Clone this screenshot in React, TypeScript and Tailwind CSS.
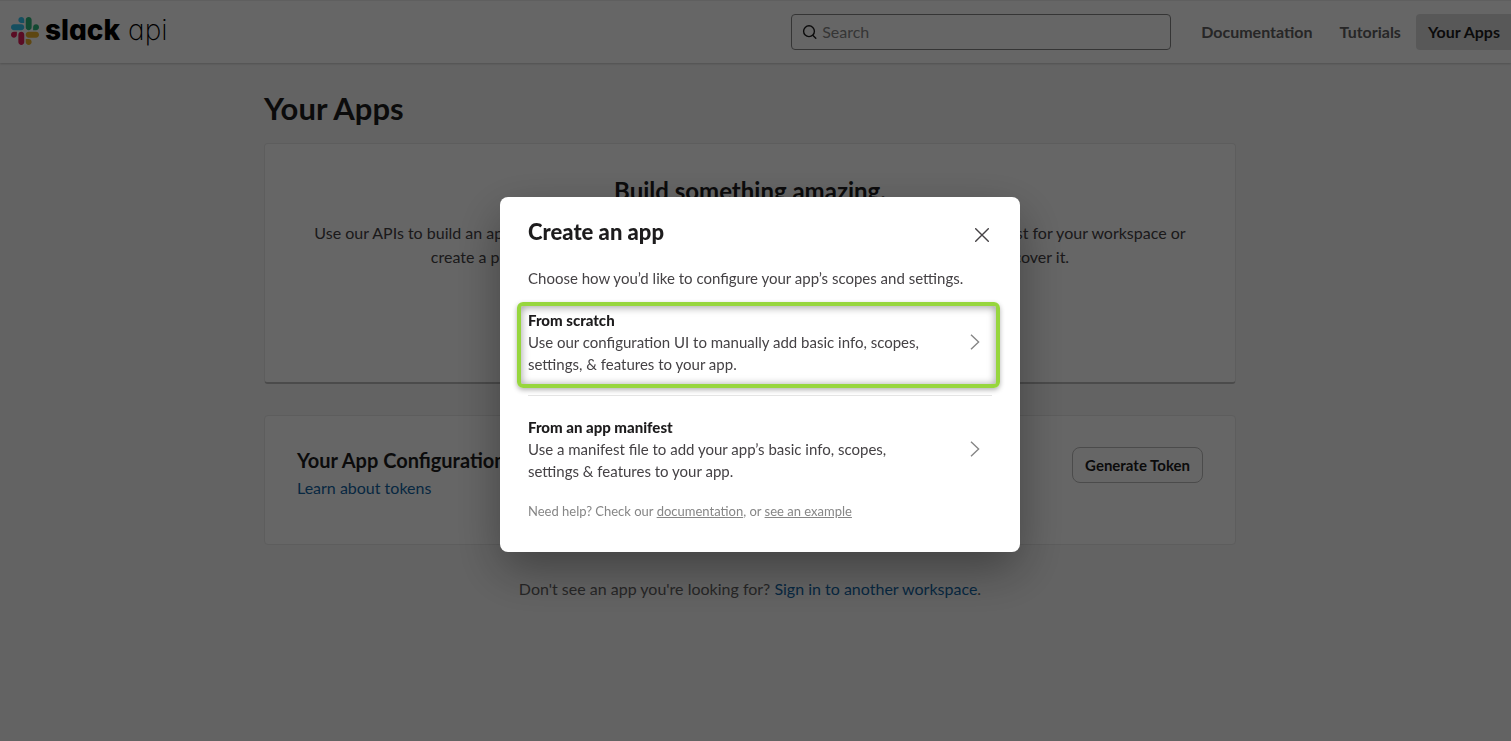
import React from "react";

const link = "text-[#1264a3]";

function SlackMark() {
  return (
    <svg viewBox="0 0 122.8 122.8" className="size-7 shrink-0" aria-hidden="true">
      <path fill="#e01e5a" d="M25.8 77.6c0 7.1-5.8 12.9-12.9 12.9S0 84.7 0 77.6s5.8-12.9 12.9-12.9h12.9v12.9zm6.5 0c0-7.1 5.8-12.9 12.9-12.9s12.9 5.8 12.9 12.9v32.3c0 7.1-5.8 12.9-12.9 12.9s-12.9-5.8-12.9-12.9V77.6z" />
      <path fill="#36c5f0" d="M45.2 25.8c-7.1 0-12.9-5.8-12.9-12.9S38.1 0 45.2 0s12.9 5.8 12.9 12.9v12.9H45.2zm0 6.5c7.1 0 12.9 5.8 12.9 12.9s-5.8 12.9-12.9 12.9H12.9C5.8 58.1 0 52.3 0 45.2s5.8-12.9 12.9-12.9h32.3z" />
      <path fill="#2eb67d" d="M97 45.2c0-7.1 5.8-12.9 12.9-12.9s12.9 5.8 12.9 12.9-5.8 12.9-12.9 12.9H97V45.2zm-6.5 0c0 7.1-5.8 12.9-12.9 12.9s-12.9-5.8-12.9-12.9V12.9C64.7 5.8 70.5 0 77.6 0s12.9 5.8 12.9 12.9v32.3z" />
      <path fill="#ecb22e" d="M77.6 97c7.1 0 12.9 5.8 12.9 12.9s-5.8 12.9-12.9 12.9-12.9-5.8-12.9-12.9V97h12.9zm0-6.5c-7.1 0-12.9-5.8-12.9-12.9s5.8-12.9 12.9-12.9h32.3c7.1 0 12.9 5.8 12.9 12.9s-5.8 12.9-12.9 12.9H77.6z" />
    </svg>
  );
}

function Header() {
  return (
    <header className="flex h-[63px] items-center justify-between border-t border-[#eee] bg-white pl-[11px] shadow-[0_1px_2px_rgba(0,0,0,0.2)]">
      <a
        href="#home"
        aria-label="slack api"
        className="flex items-center gap-1.5 pb-0.5 font-[Inter,sans-serif] text-[28px] leading-7 text-black [font-feature-settings:'cv11']"
      >
        <SlackMark />
        <span className="flex gap-2 pb-0.5">
          <span className="font-extrabold">slack</span>
          <span className="font-extralight">api</span>
        </span>
      </a>
      <div className="flex items-center">
        <label className="mr-[18px] flex h-9 w-[380px] items-center gap-1 rounded-[4px] border border-[#868686] bg-white pl-2.5 text-[#1d1c1d]">
          <svg viewBox="0 0 16 16" className="size-4 shrink-0" fill="none" stroke="currentColor" strokeWidth="1.4" strokeLinecap="round" aria-hidden="true">
            <circle cx="7" cy="7.2" r="5.4" />
            <path d="M11 11.4l2.8 2.8" />
          </svg>
          <input
            type="text"
            aria-label="Search"
            placeholder="Search"
            className="min-w-0 flex-1 bg-transparent text-base outline-none placeholder:text-[#868686]"
          />
        </label>
        <nav className="flex items-center gap-[3px] text-base font-bold text-[#616061]">
          <a href="#docs" className="px-3 py-1.5">Documentation</a>
          <a href="#tutorials" className="px-3 py-1.5">Tutorials</a>
          <a href="#apps" className="rounded-l-[4px] bg-[#ddd] py-1.5 pr-[11px] pl-3 text-[#1d1c1d]">Your Apps</a>
        </nav>
      </div>
    </header>
  );
}

function Chevron() {
  return (
    <svg viewBox="0 0 10 16" className="mr-3 h-4 w-2.5 shrink-0" fill="none" stroke="#868686" strokeWidth="1.4" aria-hidden="true">
      <path d="M1 .8L8.6 8 1 15.2" />
    </svg>
  );
}

function Option({ title, children, highlighted = false }: { title: string; children: React.ReactNode; highlighted?: boolean }) {
  return (
    <button type="button" className="relative flex w-full items-center justify-between text-left">
      <span className="max-w-[400px]">
        <span className="block font-black text-[#1d1c1d]">{title}</span>
        <span className="block">{children}</span>
      </span>
      <Chevron />
      {highlighted && (
        <span className="absolute -top-[7px] -right-2 -bottom-[13px] -left-[11px] rounded-md border-4 border-[#97d63e] shadow-[0_2px_5px_rgba(0,0,0,0.3),inset_0_1px_8px_rgba(0,0,0,0.4)]" />
      )}
    </button>
  );
}

function CreateAppDialog() {
  return (
    <div className="fixed inset-0 flex items-center justify-center bg-black/60 pt-2 pl-[9px]">
      <section
        role="dialog"
        aria-modal="true"
        aria-labelledby="dialog-title"
        className="w-[520px] rounded-lg bg-white px-7 pt-5 pb-[30px] text-[15px] leading-[22px] text-[#454245] shadow-[0_18px_48px_rgba(0,0,0,0.35)]"
      >
        <div className="flex items-center justify-between">
          <h2 id="dialog-title" className="text-[22px] leading-[30px] font-black text-[#1d1c1d]">Create an app</h2>
          <button type="button" aria-label="Close" className="mt-1.5 mr-[3px]">
            <svg viewBox="0 0 14 14" className="size-3.5" fill="none" stroke="#454245" strokeWidth="1.4" strokeLinecap="round">
              <path d="M.7 .7l12.6 12.6M13.3 .7L.7 13.3" />
            </svg>
          </button>
        </div>
        <p className="mt-5 mb-5">Choose how you’d like to configure your app’s scopes and settings.</p>
        <Option title="From scratch" highlighted>
          Use our configuration UI to manually add basic info, scopes, settings, &amp; features to your app.
        </Option>
        <hr className="my-5 border-[#e4e4e4]" />
        <Option title="From an app manifest">
          Use a manifest file to add your app’s basic info, scopes, settings &amp; features to your app.
        </Option>
        <p className="mt-[18px] text-[13px] text-[#868686]">
          Need help? Check our <a href="#documentation" className="underline">documentation</a>, or{" "}
          <a href="#example" className="underline">see an example</a>
        </p>
      </section>
    </div>
  );
}

export default function App() {
  return (
    <div className="min-h-screen bg-[#f8f8f8] font-[Lato,sans-serif] text-[#454245]">
      <Header />
      <main className="pt-[25px] pr-[11px]">
        <div className="mx-auto w-full max-w-[972px]">
          <h1 className="text-[31px] leading-10 font-bold text-[#1d1c1d]">Your Apps</h1>
          <section className="mt-[15px] min-h-[241px] rounded-[4px] border border-b-2 border-[#e8e8e8] border-b-[#bbb] bg-white px-12 pt-[31px] text-center">
            <h2 className="text-2xl leading-8 font-bold text-[#1d1c1d]">Build something amazing.</h2>
            <p className="mt-3.5 text-base leading-6">
              Use our APIs to build an app that makes people's working lives better. You can create an app that's just for your workspace or
              <br />
              create a public app to list in the Slack App Directory, where anyone on Slack can discover it.
            </p>
          </section>
          <section className="mt-[31px] flex min-h-[130px] items-start justify-between rounded-[4px] border border-[#e8e8e8] bg-white p-8 pt-[30px]">
            <div>
              <h2 className="text-xl leading-7 font-bold text-[#1d1c1d]">Your App Configuration Tokens</h2>
              <a href="#tokens" className={`${link} text-base leading-7`}>Learn about tokens</a>
            </div>
            <button type="button" className="mt-px rounded-lg border border-[#bbb] px-3 py-1.5 text-[15px] leading-[22px] font-bold text-[#1d1c1d]">
              Generate Token
            </button>
          </section>
          <p className="mt-8 text-center text-base text-[#616061]">
            Don't see an app you're looking for? <a href="#signin" className={link}>Sign in to another workspace</a>.
          </p>
        </div>
      </main>
      <CreateAppDialog />
    </div>
  );
}
